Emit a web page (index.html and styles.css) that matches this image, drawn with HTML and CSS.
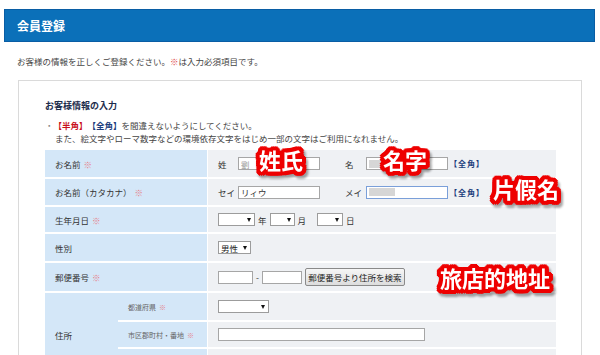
FILE: index.html
```html
<!DOCTYPE html>
<html lang="ja">
<head>
  <meta charset="UTF-8">
  <meta name="viewport" content="width=device-width, initial-scale=1.0">
  <title>会員登録</title>
  <link rel="stylesheet" href="styles.css">
</head>
<body>
  <div class="page">
    <h1 class="page-title">会員登録</h1>
    <p class="lead">お客様の情報を正しくご登録ください。<span class="req">※</span>は入力必須項目です。</p>

    <div class="card">
      <h2 class="card-title">お客様情報の入力</h2>
      <div class="notes">
        <p><span class="dot">・</span><b class="hankaku">【半角】</b><b class="zenkaku">【全角】</b>を間違えないようにしてください。</p>
        <p class="indent">また、絵文字やローマ数字などの環境依存文字をはじめ一部の文字はご利用になれません。</p>
      </div>

      <div class="form-grid">
        <!-- name -->
        <div class="label">お名前 <span class="mark">※</span></div>
        <div class="value">
          <span class="nm">姓</span><input class="txt w82 ghost" type="text" value="劉">
          <span class="nm gap">名</span><input class="txt w82 blur" type="text">
          <b class="zen">【全角】</b>
        </div>

        <!-- kana -->
        <div class="label">お名前（カタカナ） <span class="mark">※</span></div>
        <div class="value">
          <span class="nm">セイ</span><input class="txt w82" type="text" value="リィウ">
          <span class="nm gap">メイ</span><input class="txt w82 blur focus" type="text">
          <b class="zen">【全角】</b>
        </div>

        <!-- birthday -->
        <div class="label">生年月日 <span class="mark">※</span></div>
        <div class="value">
          <span class="sel w37"></span><span class="unit">年</span>
          <span class="sel w25"></span><span class="unit">月</span>
          <span class="sel w26 far"></span><span class="unit">日</span>
        </div>

        <!-- gender -->
        <div class="label">性別</div>
        <div class="value">
          <span class="sel w33">男性</span>
        </div>

        <!-- zip -->
        <div class="label">郵便番号 <span class="mark">※</span></div>
        <div class="value">
          <input class="txt w35" type="text">
          <span class="dash">-</span>
          <input class="txt w40" type="text">
          <button class="btn" type="button">郵便番号より住所を検索</button>
        </div>

        <!-- address -->
        <div class="label label-addr">住所</div>
        <div class="sublabel">都道府県 <span class="mark">※</span></div>
        <div class="value">
          <span class="sel w51"></span>
        </div>
        <div class="sublabel">市区郡町村・番地 <span class="mark">※</span></div>
        <div class="value">
          <input class="txt w207" type="text">
        </div>
        <div class="sublabel"></div>
        <div class="value"></div>
      </div>
    </div>
  </div>

  <!-- annotations drawn over the screenshot -->
  <span class="sticker s-sei">姓氏</span>
  <span class="sticker s-mei">名字</span>
  <span class="sticker s-kana">片假名</span>
  <span class="sticker s-addr">旅店的地址</span>
</body>
</html>
```

FILE: styles.css
```css
* {
  box-sizing: border-box;
}

body {
  margin: 0;
  height: 355px;
  overflow: hidden;
  position: relative;
  background: #fff;
  color: #444;
  font-family: "Noto Sans CJK JP", "Noto Sans", sans-serif;
  font-size: 8.5px;
}

.page {
  padding: 9px 5px 0 4px;
}

.page-title {
  margin: 0;
  height: 33px;
  padding-left: 12px;
  background: #0b70b9;
  border: 1px solid #095da4;
  color: #fff;
  font-size: 12px;
  font-weight: bold;
  line-height: 31px;
}

.lead {
  margin: 13px 0 0 13px;
  line-height: 12px;
}

.req {
  color: #e0474c;
}

.card {
  margin: 13px 13px 0 14px;
  padding: 19px 25px 0 26px;
  border: 1px solid #dadada;
  border-bottom: none;
}

.card-title {
  margin: 0;
  color: #1c2c4c;
  font-size: 9px;
  font-weight: bold;
  line-height: 12px;
}

.notes {
  margin-top: 7px;
  line-height: 13px;
  text-spacing-trim: space-all;
}

.notes p {
  margin: 0;
}

.dot {
  color: #888;
}

.indent {
  padding-left: 10px;
}

.hankaku {
  color: #c8101c;
}

.zenkaku {
  color: #1c3d7c;
}

/* form table */
.form-grid {
  margin-top: 5px;
  display: grid;
  grid-template-columns: 73px 89px 1fr;
  grid-template-rows: 27px 26px 25px 27px 28px 27px 25px 27px;
  row-gap: 2px;
}

.label {
  grid-column: 1 / 3;
  display: flex;
  align-items: center;
  padding-left: 10px;
  background: #d4e7f8;
  color: #333;
}

.label-addr {
  grid-column: 1;
  grid-row: span 3;
}

.sublabel {
  grid-column: 2;
  display: flex;
  align-items: center;
  padding-left: 10px;
  background: #d4e7f8;
  color: #666;
  font-size: 7px;
}

.mark {
  margin-left: 3px;
  color: #e6818a;
}

.value {
  grid-column: 3;
  display: flex;
  align-items: center;
  padding-left: 10px;
  background: #eff1f4;
  border-left: 1px solid #fff;
  color: #333;
}

.nm {
  width: 20px;
  flex-shrink: 0;
}

.nm.gap {
  margin-left: 25px;
  width: 21px;
}

.txt {
  height: 13px;
  padding: 0 2px;
  border: 1px solid #a6a6a6;
  border-radius: 0;
  background: #fff;
  color: #333;
  font-family: inherit;
  font-size: 8.5px;
  outline: none;
}

.ghost {
  color: #999;
}

.blur {
  background: linear-gradient(#d6d6d6, #d6d6d6) 2px 50% / 26px 8px no-repeat, #fff;
}

.focus {
  border-color: #7a9fd9;
}

.w35 { width: 35px; }
.w40 { width: 40px; }
.w82 { width: 82px; }
.w207 { width: 207px; }

.zen {
  margin-left: 5px;
  color: #1c3d7c;
  font-size: 8px;
  font-feature-settings: "palt";
  letter-spacing: 1px;
}

/* select boxes */
.sel {
  display: inline-flex;
  align-items: center;
  height: 13px;
  padding: 0 3px 0 2px;
  border: 1px solid #9c9c9c;
  background: #fff;
  color: #222;
}

.sel::after {
  content: "";
  margin-left: auto;
  border-left: 2.5px solid transparent;
  border-right: 2.5px solid transparent;
  border-top: 4px solid #111;
}

.w25 { width: 25px; }
.w26 { width: 26px; }
.w33 { width: 33px; }
.w37 { width: 37px; }
.w51 { width: 51px; }

.unit {
  margin: 0 3px 0 3px;
}

.far {
  margin-left: 8px;
}

.dash {
  margin: 0 3px;
}

.btn {
  width: 100px;
  height: 18px;
  margin-left: 3px;
  padding: 0;
  border: 1px solid #8a8a8a;
  border-radius: 2px;
  background: linear-gradient(#f6f6f6, #dddddd);
  color: #222;
  font-family: inherit;
  font-size: 8.5px;
}

/* red annotation labels */
.sticker {
  position: absolute;
  color: #fff;
  font-size: 22px;
  font-weight: bold;
  line-height: 1;
  white-space: nowrap;
  text-shadow:
    2px 0 #ee0000, -2px 0 #ee0000, 0 2px #ee0000, 0 -2px #ee0000,
    2px 2px #ee0000, -2px 2px #ee0000, 2px -2px #ee0000, -2px -2px #ee0000,
    4px 0 #ee0000, -4px 0 #ee0000, 0 4px #ee0000, 0 -4px #ee0000,
    3px 3px #ee0000, -3px 3px #ee0000, 3px -3px #ee0000, -3px -3px #ee0000,
    4px 2px #ee0000, -4px 2px #ee0000, 4px -2px #ee0000, -4px -2px #ee0000,
    2px 4px #ee0000, -2px 4px #ee0000, 2px -4px #ee0000, -2px -4px #ee0000;
  filter: drop-shadow(2px 3px 1px rgba(0, 0, 0, 0.35));
}

.s-sei {
  left: 259px;
  top: 148px;
}

.s-mei {
  left: 383px;
  top: 148px;
}

.s-kana {
  left: 493px;
  top: 177px;
}

.s-addr {
  left: 440px;
  top: 266px;
}
```
